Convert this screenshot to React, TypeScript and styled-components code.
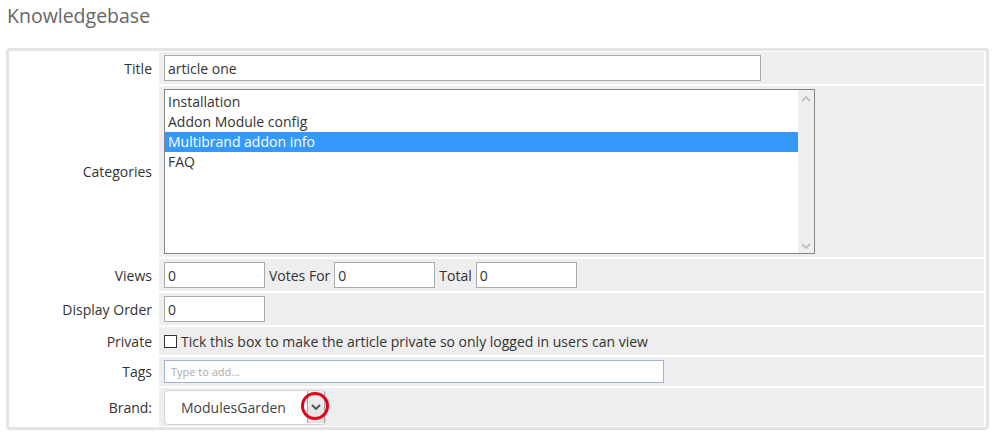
import { createGlobalStyle } from 'styled-components';
import styled from 'styled-components';

const GlobalStyle = createGlobalStyle`
  html, body {
    margin: 0;
    padding: 0;
    background: #fff;
  }
  body {
    font-family: 'Open Sans', 'Liberation Sans', sans-serif;
    font-size: 14px;
    color: #333;
  }
`;

const Page = styled.div`
  padding: 4px 6px 0 6px;
  width: 983px;
`;

const Heading = styled.h1`
  margin: 0 0 20px 1px;
  font-size: 19.5px;
  font-weight: 400;
  line-height: 24px;
  color: #666;
`;

const Panel = styled.div`
  border: 3px solid #e2e5e8;
  border-radius: 4px;
  padding: 1px 2px 1px 1px;
  display: grid;
  grid-template-columns: 147px 1fr;
  gap: 2px;
`;

const Label = styled.div`
  display: flex;
  align-items: center;
  justify-content: flex-end;
  padding-right: 5px;
  background: #fff;
  color: #333;
  font-size: 14px;
`;

const Field = styled.div<{ $h: number }>`
  background: #eee;
  height: ${(p) => p.$h}px;
  display: flex;
  align-items: center;
  gap: 4px;
  padding-left: 5px;
  font-size: 14px;
`;

const TextInput = styled.div<{ $w: number }>`
  box-sizing: border-box;
  width: ${(p) => p.$w}px;
  height: 26px;
  background: #fff;
  border: 1px solid #aaa;
  padding: 0 3px;
  display: flex;
  align-items: center;
  font-size: 14px;
  color: #333;
`;

const ListBox = styled.div`
  box-sizing: border-box;
  width: 651px;
  height: 165px;
  align-self: flex-start;
  margin-top: 3px;
  background: #fff;
  border: 1px solid #82858c;
  display: flex;
`;

const Options = styled.div`
  flex: 1;
  padding-top: 2px;
`;

const Option = styled.div<{ $selected?: boolean }>`
  height: 20px;
  line-height: 20px;
  padding-left: 3px;
  font-size: 14px;
  background: ${(p) => (p.$selected ? '#3399ff' : 'transparent')};
  color: ${(p) => (p.$selected ? '#fff' : '#333')};
`;

const ScrollTrack = styled.div`
  width: 16px;
  background: #efefef;
  display: flex;
  flex-direction: column;
  justify-content: space-between;
  align-items: center;
  padding: 6px 0 4px;
`;

const InlineLabel = styled.span`
  color: #333;
  font-size: 14px;
`;

const CheckBox = styled.span`
  box-sizing: border-box;
  width: 13px;
  height: 13px;
  border: 1px solid #333;
  background: #fff;
  display: inline-block;
`;

const TagsInput = styled.div`
  box-sizing: border-box;
  width: 500px;
  height: 23px;
  background: #fff;
  border: 1px solid #a3b2d3;
  padding-left: 6px;
  display: flex;
  align-items: center;
  font-size: 11px;
  color: #aaa;
`;

const Select = styled.div`
  position: relative;
  box-sizing: border-box;
  width: 162px;
  height: 35px;
  background: #fff;
  border: 1px solid #d4d4d4;
  border-radius: 4px;
  display: flex;
  align-items: center;
  padding-left: 16px;
  font-size: 14px;
  color: #444;
`;

const SelectArrow = styled.div`
  position: absolute;
  right: 0;
  top: 0;
  bottom: 1px;
  width: 16px;
  background: linear-gradient(#f2f2f2, #e0e0e0);
  border-left: 1px solid #a6a6a6;
  border-right: 1px solid #a6a6a6;
  display: flex;
  align-items: center;
  justify-content: center;
`;

const Marker = styled.div`
  position: absolute;
  box-sizing: border-box;
  right: -4px;
  top: 1px;
  width: 28px;
  height: 28px;
  border: 3px solid #e3001b;
  border-radius: 50%;
  pointer-events: none;
`;

const Chevron = ({ up, color }: { up?: boolean; color: string }) => (
  <svg width="10" height="6" viewBox="0 0 10 6">
    <path
      d={up ? 'M1 5 L5 1 L9 5' : 'M1 1 L5 5 L9 1'}
      fill="none"
      stroke={color}
      strokeWidth="2"
    />
  </svg>
);

export default function App() {
  return (
    <>
      <GlobalStyle />
      <Page>
        <Heading>Knowledgebase</Heading>
        <Panel>
          <Label>Title</Label>
          <Field $h={32}>
            <TextInput $w={597}>article one</TextInput>
          </Field>

          <Label>Categories</Label>
          <Field $h={171}>
            <ListBox>
              <Options>
                <Option>Installation</Option>
                <Option>Addon Module config</Option>
                <Option $selected>Multibrand addon info</Option>
                <Option>FAQ</Option>
              </Options>
              <ScrollTrack>
                <Chevron up color="#c3c3c3" />
                <Chevron color="#c3c3c3" />
              </ScrollTrack>
            </ListBox>
          </Field>

          <Label>Views</Label>
          <Field $h={32}>
            <TextInput $w={101}>0</TextInput>
            <InlineLabel>Votes For</InlineLabel>
            <TextInput $w={101}>0</TextInput>
            <InlineLabel>Total</InlineLabel>
            <TextInput $w={101}>0</TextInput>
          </Field>

          <Label>Display Order</Label>
          <Field $h={32}>
            <TextInput $w={101}>0</TextInput>
          </Field>

          <Label>Private</Label>
          <Field $h={28}>
            <CheckBox />
            <InlineLabel>
              Tick this box to make the article private so only logged in users can view
            </InlineLabel>
          </Field>

          <Label>Tags</Label>
          <Field $h={29}>
            <TagsInput>Type to add...</TagsInput>
          </Field>

          <Label>Brand:</Label>
          <Field $h={38}>
            <Select>
              ModulesGarden
              <SelectArrow>
                <Chevron color="#555" />
              </SelectArrow>
              <Marker />
            </Select>
          </Field>
        </Panel>
      </Page>
    </>
  );
}
